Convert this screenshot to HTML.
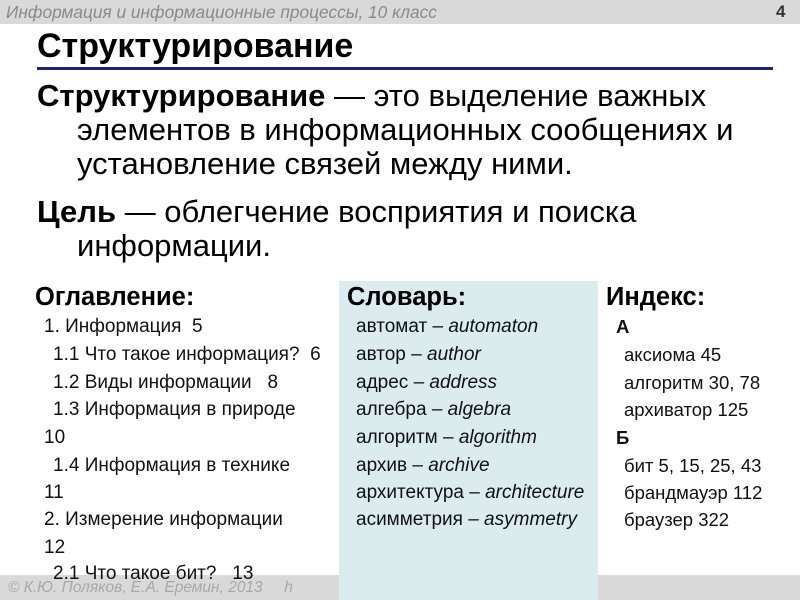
<!DOCTYPE html>
<html><head><meta charset="utf-8"><style>
body{margin:0;width:800px;height:600px;position:relative;overflow:hidden;background:#fff;font-family:"Liberation Sans",sans-serif;color:#000}
.a{position:absolute;white-space:nowrap}
.hb{position:absolute;left:0;top:0;width:800px;height:24px;background:#d9d9d9}
.fb{position:absolute;left:0;top:575px;width:800px;height:25px;background:#d9d9d9}
.big{font-size:31px}
.l{font-size:19px;color:#111}
.k{font-size:18.5px;color:#111}
.h{font-size:25.5px;font-weight:bold}
</style></head><body>
<div class="hb"></div>
<div class="a" style="left:6px;top:2px;font-size:17.3px;font-style:italic;color:#8a8a8a">Информация и информационные процессы, 10 класс</div>
<div class="a" style="left:776px;top:2px;font-size:17px;font-weight:bold;color:#333">4</div>
<div class="a" style="left:37px;top:27px;font-size:34px;font-weight:bold">Структурирование</div>
<div style="position:absolute;left:37px;top:67px;width:736px;height:3px;background:#1a237e"></div>
<div class="a big" style="left:37px;top:78px"><b>Структурирование</b> — это выделение важных</div>
<div class="a big" style="left:77px;top:112px">элементов в информационных сообщениях и</div>
<div class="a big" style="left:77px;top:146px">установление связей между ними.</div>
<div class="a big" style="left:37px;top:194px"><b>Цель</b> — облегчение восприятия и поиска</div>
<div class="a big" style="left:77px;top:228px">информации.</div>
<div class="fb"></div>
<div class="a" style="left:8px;top:579px;font-size:15.5px;font-style:italic;color:#a8a8a8">© К.Ю. Поляков, Е.А. Еремин, 2013 &nbsp;&nbsp;&nbsp; h</div>
<div style="position:absolute;left:339px;top:281px;width:259px;height:319px;background:#dbebee"></div>
<div class="a h" style="left:35px;top:283px">Оглавление:</div>
<div class="a l" style="left:44px;top:316px">1. Информация&nbsp; 5</div>
<div class="a l" style="left:53px;top:344px">1.1 Что такое информация?&nbsp; 6</div>
<div class="a l" style="left:53px;top:372px">1.2 Виды информации&nbsp;&nbsp; 8</div>
<div class="a l" style="left:53px;top:399px">1.3 Информация в природе</div>
<div class="a l" style="left:44px;top:427px">10</div>
<div class="a l" style="left:53px;top:455px">1.4 Информация в технике</div>
<div class="a l" style="left:44px;top:482px">11</div>
<div class="a l" style="left:44px;top:509px">2. Измерение информации</div>
<div class="a l" style="left:44px;top:537px">12</div>
<div class="a l" style="left:53px;top:563px">2.1 Что такое бит?&nbsp;&nbsp; 13</div>
<div class="a h" style="left:347px;top:283px">Словарь:</div>
<div class="a l" style="left:356px;top:316px">автомат – <i>automaton</i></div>
<div class="a l" style="left:356px;top:344px">автор – <i>author</i></div>
<div class="a l" style="left:356px;top:372px">адрес – <i>address</i></div>
<div class="a l" style="left:356px;top:399px">алгебра – <i>algebra</i></div>
<div class="a l" style="left:356px;top:427px">алгоритм – <i>algorithm</i></div>
<div class="a l" style="left:356px;top:455px">архив – <i>archive</i></div>
<div class="a l" style="left:356px;top:482px">архитектура – <i>architecture</i></div>
<div class="a l" style="left:356px;top:509px">асимметрия – <i>asymmetry</i></div>
<div class="a h" style="left:606px;top:283px">Индекс:</div>
<div class="a k" style="left:616px;top:316px;font-weight:bold">А</div>
<div class="a k" style="left:624px;top:344px">аксиома 45</div>
<div class="a k" style="left:624px;top:372px">алгоритм 30, 78</div>
<div class="a k" style="left:624px;top:399px">архиватор 125</div>
<div class="a k" style="left:616px;top:427px;font-weight:bold">Б</div>
<div class="a k" style="left:624px;top:455px">бит 5, 15, 25, 43</div>
<div class="a k" style="left:624px;top:482px">брандмауэр 112</div>
<div class="a k" style="left:624px;top:509px">браузер 322</div>
</body></html>
